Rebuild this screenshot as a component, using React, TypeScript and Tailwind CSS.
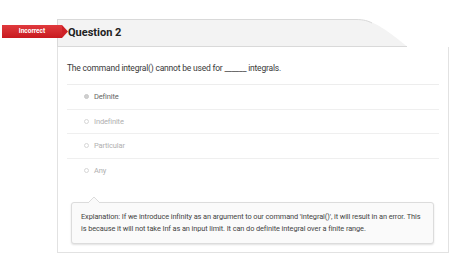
export default function App() {
  const options = ["Definite", "Indefinite", "Particular", "Any"];
  const picked = "Definite";

  return (
    <div className="relative w-[474px] h-[270px] bg-white font-['Roboto',sans-serif] overflow-hidden">
      {/* badge over the card edge */}
      <div className="absolute left-[2px] top-[25px] flex h-[13px]">
        <div className="flex w-[60px] items-center justify-center bg-gradient-to-b from-[#e0393d] to-[#c8191f] text-[6.5px] font-bold text-white">
          Incorrect
        </div>
        <svg width="6" height="13" viewBox="0 0 6 13" className="block">
          <polygon points="0,0 6,6.5 0,13" fill="#cf2026" />
        </svg>
      </div>

      <div className="pt-[19px] pl-[57px] pr-[25px]">
        {/* header tab */}
        <div className="flex h-[28px] w-[350px]">
          <div className="flex flex-1 items-center border-t border-b border-l border-[#d9d9d9] bg-[#f3f3f3] pl-[10px]">
            <span className="text-[11px] font-bold text-[#222]">Question 2</span>
          </div>
          <svg width="57" height="28" viewBox="0 0 57 28" className="block shrink-0">
            <path d="M0,0.5 L6,0.5 C20,0.5 28,4 57,27.5 L0,27.5 Z" fill="#f3f3f3" />
            <path d="M0,0.5 L6,0.5 C14,0.5 18,2 22,4" fill="none" stroke="#d9d9d9" strokeWidth="1" />
            <path d="M0,27.5 L57,27.5" fill="none" stroke="#d9d9d9" strokeWidth="1" />
          </svg>
        </div>

        {/* card body */}
        <div className="h-[206px] border-l border-b border-r border-[#e2e2e2] px-[9px]">
          <p className="pt-[15px] text-[8.5px] leading-[12px] tracking-[-0.2px] text-[#3a3a3a]">
            The command integral() cannot be used for ______ integrals.
          </p>
          <div className="mt-[10px] border-t border-[#ededed]">
            {options.map((o, i) => (
              <div
                key={o}
                className={
                  i < options.length - 1
                    ? "flex h-[24.5px] items-center gap-[5px] border-b border-[#efefef] pl-[17px]"
                    : "flex h-[24.5px] items-center gap-[5px] pl-[17px]"
                }
              >
                <span
                  className={
                    o === picked
                      ? "h-[5px] w-[5px] rounded-full border border-[#c8c8c8] bg-[#d0d0d0]"
                      : "h-[5px] w-[5px] rounded-full border border-[#d6d6d6]"
                  }
                />
                <span
                  className={
                    o === picked
                      ? "text-[7.5px] tracking-[-0.15px] text-[#666]"
                      : "text-[7.5px] tracking-[-0.15px] text-[#b0b0b0]"
                  }
                >
                  {o}
                </span>
              </div>
            ))}
          </div>

          {/* explanation */}
          <div className="relative mt-[19px] ml-[4px] mr-[5px] rounded-[3px] border border-[#dcdcdc] bg-[#fafafa] px-[9px] py-[8px] shadow-[0_1px_2px_rgba(0,0,0,0.12)]">
            <svg width="12" height="7" viewBox="0 0 12 7" className="absolute left-[16px] top-[-7px]">
              <path d="M0,7 L6,1 L12,7" fill="#fafafa" stroke="#dcdcdc" strokeWidth="1" />
            </svg>
            <p className="whitespace-nowrap text-[7.4px] leading-[12px] tracking-[-0.1px] text-[#444]">
              Explanation: If we introduce infinity as an argument to our command 'integral()', it will result in an error. This
              <br />
              is because it will not take Inf as an input limit. It can do definite integral over a finite range.
            </p>
          </div>
        </div>
      </div>
    </div>
  );
}
